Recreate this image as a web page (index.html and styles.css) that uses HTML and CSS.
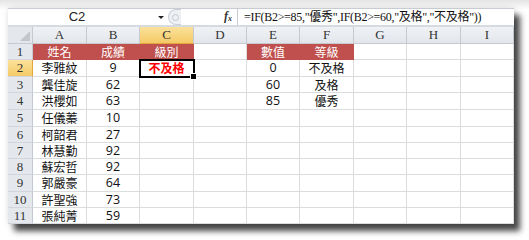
FILE: index.html
```html
<!DOCTYPE html>
<html>
<head>
<meta charset="utf-8">
<link rel="stylesheet" href="styles.css">
</head>
<body>
<div class="win">
  <div class="fbar">
    <div class="namebox"><span class="nb-text">C2</span><span class="nb-arrow"></span></div>
    <div class="splitter"><span class="dot"></span></div>
    <div class="fxbox"><span class="fx">f<sub>x</sub></span></div>
    <div class="formula">=IF(B2&gt;=85,"優秀",IF(B2&gt;=60,"及格","不及格"))</div>
  </div>
  <div class="sheet">
    <div class="corner"><span class="tri"></span></div>
    <div class="ch">A</div><div class="ch">B</div><div class="ch sel">C</div><div class="ch">D</div><div class="ch">E</div><div class="ch">F</div><div class="ch">G</div><div class="ch">H</div><div class="ch">I</div>

    <div class="rh">1</div><div class="c hd">姓名</div><div class="c hd">成績</div><div class="c hd">級別</div><div class="c"></div><div class="c hd">數值</div><div class="c hd">等級</div><div class="c"></div><div class="c"></div><div class="c"></div>
    <div class="rh sel">2</div><div class="c cj">李雅紋</div><div class="c n">9</div><div class="c active">不及格</div><div class="c"></div><div class="c n">0</div><div class="c cj">不及格</div><div class="c"></div><div class="c"></div><div class="c"></div>
    <div class="rh">3</div><div class="c cj">龔佳旋</div><div class="c n">62</div><div class="c"></div><div class="c"></div><div class="c n">60</div><div class="c cj">及格</div><div class="c"></div><div class="c"></div><div class="c"></div>
    <div class="rh">4</div><div class="c cj">洪櫻如</div><div class="c n">63</div><div class="c"></div><div class="c"></div><div class="c n">85</div><div class="c cj">優秀</div><div class="c"></div><div class="c"></div><div class="c"></div>
    <div class="rh">5</div><div class="c cj">任儀蓁</div><div class="c n">10</div><div class="c"></div><div class="c"></div><div class="c"></div><div class="c"></div><div class="c"></div><div class="c"></div><div class="c"></div>
    <div class="rh">6</div><div class="c cj">柯韶君</div><div class="c n">27</div><div class="c"></div><div class="c"></div><div class="c"></div><div class="c"></div><div class="c"></div><div class="c"></div><div class="c"></div>
    <div class="rh">7</div><div class="c cj">林慧勤</div><div class="c n">92</div><div class="c"></div><div class="c"></div><div class="c"></div><div class="c"></div><div class="c"></div><div class="c"></div><div class="c"></div>
    <div class="rh">8</div><div class="c cj">蘇宏哲</div><div class="c n">92</div><div class="c"></div><div class="c"></div><div class="c"></div><div class="c"></div><div class="c"></div><div class="c"></div><div class="c"></div>
    <div class="rh">9</div><div class="c cj">郭嚴豪</div><div class="c n">64</div><div class="c"></div><div class="c"></div><div class="c"></div><div class="c"></div><div class="c"></div><div class="c"></div><div class="c"></div>
    <div class="rh">10</div><div class="c cj">許聖強</div><div class="c n">73</div><div class="c"></div><div class="c"></div><div class="c"></div><div class="c"></div><div class="c"></div><div class="c"></div><div class="c"></div>
    <div class="rh">11</div><div class="c cj">張純菁</div><div class="c n">59</div><div class="c"></div><div class="c"></div><div class="c"></div><div class="c"></div><div class="c"></div><div class="c"></div><div class="c"></div>
  </div>
</div>
</body>
</html>
```

FILE: styles.css
```css
html, body {
  margin: 0;
  padding: 0;
  background: #ffffff;
}
body {
  width: 529px;
  height: 240px;
  overflow: hidden;
  background: linear-gradient(#e4e4e4, #ffffff 10px);
}
.win {
  margin: 8px 0 0 8px;
  width: 506px;
  height: 216px;
  background: #fff;
  box-shadow: 6px 7px 6px rgba(0, 0, 0, 0.72), 0 0 6px rgba(0, 0, 0, 0.12);
  font-family: "Liberation Serif", "Noto Sans CJK TC", serif;
}
.fbar {
  display: flex;
  border-top: 1px solid #c8ccd2;
  border-bottom: 2px solid #d6dbe1;
  box-sizing: border-box;
  height: 19px;
  background: #fff;
}
.namebox {
  width: 160px;
  display: flex;
  align-items: center;
}
.nb-text {
  flex: 1;
  text-align: center;
  font-family: "Liberation Sans", sans-serif;
  font-size: 13px;
  line-height: 16px;
  color: #222;
  padding-right: 12px;
}
.nb-arrow {
  width: 0;
  height: 0;
  border-left: 3px solid transparent;
  border-right: 3px solid transparent;
  border-top: 3px solid #222;
  margin-right: 4px;
}
.splitter {
  width: 13px;
  background: #eef0f3;
  border: 1px solid #c9ced6;
  border-right: none;
  border-radius: 8px 0 0 8px;
  box-sizing: border-box;
  display: flex;
  align-items: center;
  justify-content: center;
}
.dot {
  width: 5px;
  height: 5px;
  border-radius: 50%;
  border: 1px solid #c3c8cf;
}
.fxbox {
  width: 56px;
  display: flex;
  align-items: center;
  justify-content: flex-end;
  border-right: 1px solid #c6cbd2;
  background: #fff;
}
.fx {
  font-family: "Liberation Serif", serif;
  font-style: italic;
  font-weight: bold;
  font-size: 12px;
  line-height: 14px;
  color: #333;
  margin-right: 5px;
}
.fx sub {
  font-size: 8px;
  vertical-align: -1px;
}
.formula {
  flex: 1;
  padding-left: 6px;
  font-family: "Liberation Serif", "Noto Sans CJK TC", serif;
  font-size: 12px;
  line-height: 16px;
  letter-spacing: -0.3px;
  color: #111;
  white-space: nowrap;
  overflow: hidden;
}
.sheet {
  display: grid;
  grid-template-columns: 25px 54px 53px 54px 53px 53px 54px 53px 54px 53px;
  grid-template-rows: 17px 16px 17px 16px 17px 17px 16px 16px 16px 17px 16px 16px;
}
.corner {
  background: #e4e8ed;
  border-right: 1px solid #c5cad1;
  border-bottom: 1px solid #c5cad1;
  position: relative;
}
.tri {
  position: absolute;
  right: 2px;
  bottom: 2px;
  width: 0;
  height: 0;
  border-left: 10px solid transparent;
  border-bottom: 10px solid #c3c7cc;
}
.ch {
  background: linear-gradient(#f0f2f5, #e2e6eb);
  border-right: 1px solid #c5cad1;
  border-bottom: 1px solid #c5cad1;
  text-align: center;
  font-size: 13px;
  line-height: 16px;
  color: #333;
}
.ch.sel {
  background: linear-gradient(#fbe19a, #f4ca67);
  border-bottom-color: #e2a73b;
}
.rh {
  background: #e4e8ed;
  border-right: 1px solid #c5cad1;
  border-bottom: 1px solid #d2d6dc;
  text-align: center;
  font-size: 13px;
  line-height: 15px;
  color: #333;
  overflow: hidden;
}
.rh.sel {
  background: linear-gradient(#fbe19a, #f4ca67);
  border-right-color: #e2a73b;
}
.c {
  border-right: 1px solid #dadcdd;
  border-bottom: 1px solid #dadcdd;
  text-align: center;
  line-height: 15px;
  color: #111;
  white-space: nowrap;
  overflow: hidden;
}
.c.hd {
  background: #c0504d;
  color: #fff;
  border-color: #c0504d;
  font-family: "Noto Sans CJK TC", sans-serif;
  font-size: 12px;
}
.c.cj {
  font-family: "Noto Sans CJK TC", sans-serif;
  font-size: 12px;
}
.c.n {
  font-family: "Open Sans", "Liberation Sans", sans-serif;
  font-size: 12.5px;
}
.c.active {
  position: relative;
  overflow: visible;
  outline: 2px solid #000;
  outline-offset: -1px;
  color: #ff0000;
  font-weight: bold;
  font-family: "Noto Sans CJK TC", sans-serif;
  font-size: 12px;
  z-index: 1;
}
.c.active::after {
  content: "";
  position: absolute;
  right: -4px;
  bottom: -4px;
  width: 5px;
  height: 5px;
  background: #000;
  border: 1px solid #fff;
}
```
